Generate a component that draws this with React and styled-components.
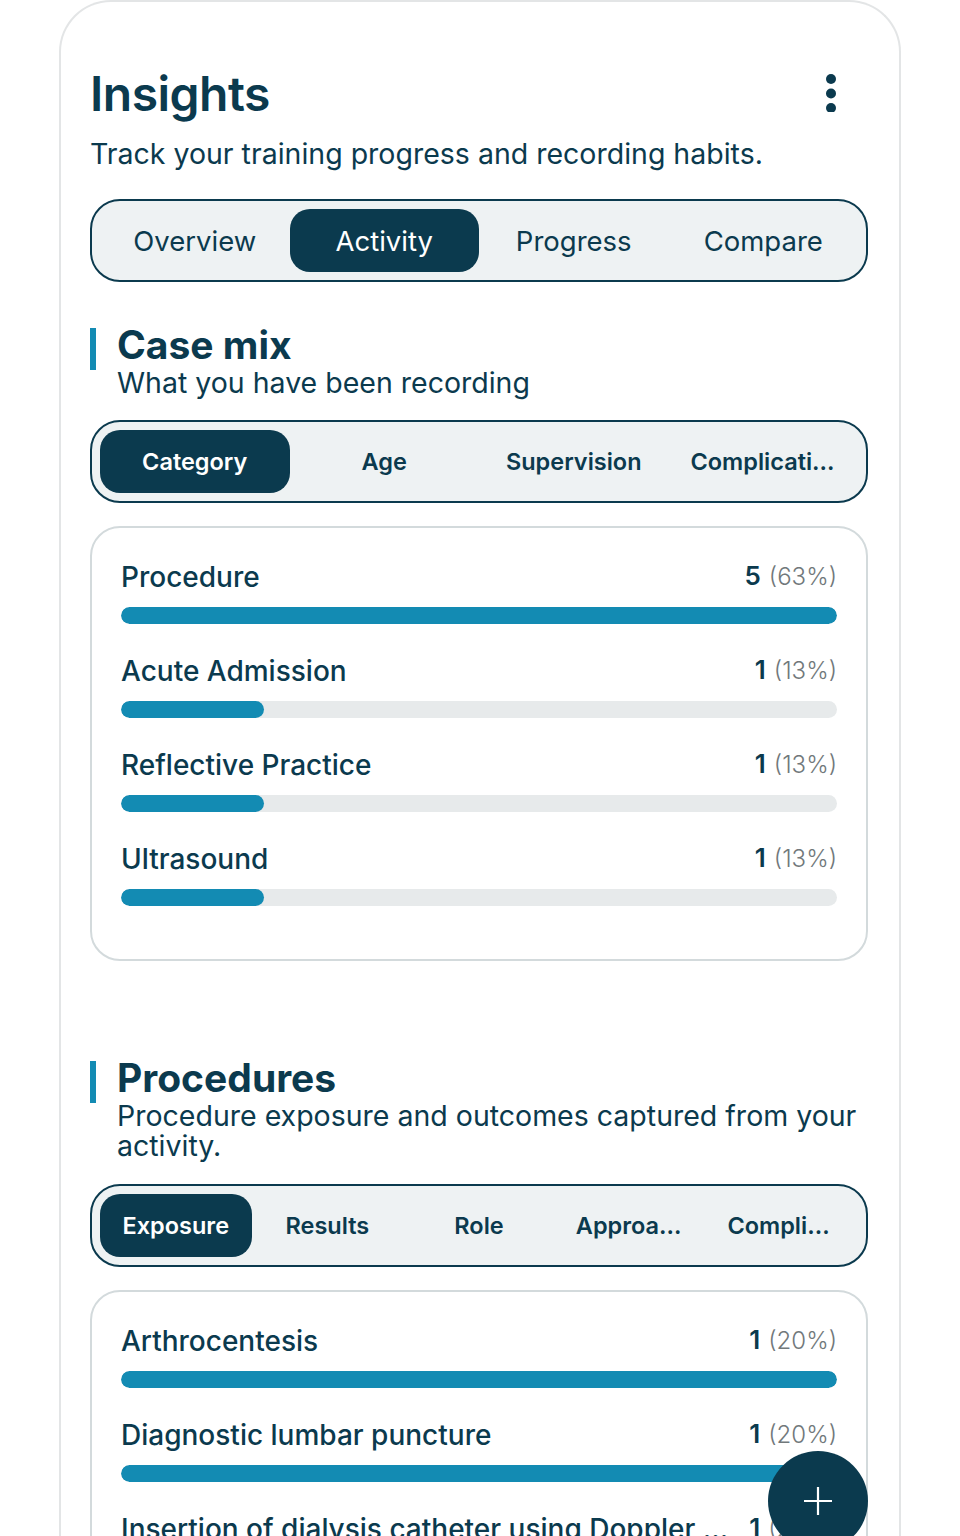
import React, { useState } from "react";
import styled, { createGlobalStyle } from "styled-components";

const ink = "#0b3a4e";
const teal = "#138bb3";

const GlobalStyle = createGlobalStyle`
  html, body {
    margin: 0;
    padding: 0;
    background: #ffffff;
    overflow: hidden;
  }
  * {
    box-sizing: border-box;
  }
`;

const Frame = styled.div`
  width: 842px;
  min-height: 1600px;
  margin: 0 auto;
  border: 2px solid #e3e5e6;
  border-bottom: none;
  border-radius: 52px 52px 0 0;
  padding: 62px 31px 0 29px;
  font-family: Inter, "Open Sans", sans-serif;
  color: ${ink};
`;

const Header = styled.div`
  display: flex;
  justify-content: space-between;
  align-items: flex-start;
`;

const Title = styled.h1`
  margin: 0;
  font-size: 48px;
  font-weight: 600;
  line-height: 60px;
  letter-spacing: -0.5px;
`;

const MoreButton = styled.button`
  border: none;
  background: none;
  padding: 10px 31px 0 0;
  cursor: pointer;
`;

const Subtitle = styled.p`
  margin: 10px 0 0;
  font-size: 28.5px;
  font-weight: 400;
  line-height: 40px;
`;

const Segmented = styled.div`
  display: grid;
  grid-template-columns: repeat(${(p) => p.$count}, 1fr);
  height: 83px;
  padding: 8px;
  margin-top: ${(p) => p.$top}px;
  border: 2px solid ${ink};
  border-radius: 30px;
  background: #eef2f3;
`;

const Segment = styled.button`
  border: none;
  border-radius: 20px;
  font-family: inherit;
  font-size: ${(p) => p.$size}px;
  font-weight: ${(p) => p.$weight};
  color: ${(p) => (p.$active ? "#ffffff" : ink)};
  background: ${(p) => (p.$active ? ink : "transparent")};
  white-space: nowrap;
  overflow: hidden;
  text-overflow: ellipsis;
  padding: 0 ${(p) => p.$pad}px;
  cursor: pointer;
`;

const Section = styled.section`
  display: flex;
  gap: 21px;
  margin-top: ${(p) => p.$top}px;
`;

const Accent = styled.div`
  flex: none;
  width: 6px;
  height: 42px;
  margin-top: 7px;
  background: ${teal};
`;

const SectionText = styled.div`
  display: flex;
  flex-direction: column;
`;

const SectionTitle = styled.h2`
  margin: 0;
  font-size: 39px;
  font-weight: 700;
  line-height: 47px;
`;

const SectionSub = styled.p`
  margin: 0;
  font-size: 28.5px;
  font-weight: 400;
  line-height: 30px;
`;

const Card = styled.div`
  display: flex;
  flex-direction: column;
  gap: 28px;
  margin-top: 23px;
  padding: 30px 29px 53px;
  border: 2px solid #d3dadc;
  border-radius: 30px;
  background: #ffffff;
`;

const Row = styled.div`
  display: flex;
  flex-direction: column;
  gap: 12px;
`;

const RowHead = styled.div`
  display: flex;
  justify-content: space-between;
  align-items: center;
  gap: 20px;
  line-height: 36px;
`;

const Label = styled.span`
  font-size: 28px;
  font-weight: 500;
  white-space: nowrap;
  overflow: hidden;
  text-overflow: ellipsis;
`;

const Count = styled.span`
  flex: none;
  font-size: 26px;
  font-weight: 600;
`;

const Share = styled.span`
  font-size: 24px;
  font-weight: 300;
  color: #71787b;
  margin-left: 8px;
`;

const Track = styled.div`
  height: 17px;
  border-radius: 9px;
  background: #e7eaeb;
  overflow: hidden;
`;

const Fill = styled.div`
  height: 100%;
  border-radius: 9px;
  background: ${teal};
`;

const Fab = styled.button`
  position: fixed;
  left: 768px;
  top: 1451px;
  width: 100px;
  height: 100px;
  border: none;
  border-radius: 50%;
  background: ${ink};
  display: flex;
  align-items: center;
  justify-content: center;
  cursor: pointer;
`;

const DotsIcon = () => (
  <svg width="12" height="38" viewBox="0 0 12 38">
    <circle cx="6" cy="5" r="5" fill={ink} />
    <circle cx="6" cy="19.5" r="5" fill={ink} />
    <circle cx="6" cy="34" r="5" fill={ink} />
  </svg>
);

const PlusIcon = () => (
  <svg width="30" height="30" viewBox="0 0 30 30">
    <path d="M15 1v28M1 15h28" stroke="#ffffff" strokeWidth="2.2" />
  </svg>
);

const Tabs = ({ items, active, onPick, size, weight, pad, top }) => (
  <Segmented $count={items.length} $top={top}>
    {items.map((item) => (
      <Segment
        key={item}
        $active={item === active}
        $size={size}
        $weight={weight}
        $pad={pad}
        onClick={() => onPick(item)}
      >
        {item}
      </Segment>
    ))}
  </Segmented>
);

const Breakdown = ({ rows }) => (
  <Card>
    {rows.map((r) => (
      <Row key={r.label}>
        <RowHead>
          <Label>{r.label}</Label>
          <Count>
            {r.count}
            <Share>({r.pct}%)</Share>
          </Count>
        </RowHead>
        <Track>
          <Fill style={{ width: `${r.width}%` }} />
        </Track>
      </Row>
    ))}
  </Card>
);

const caseMix = [
  { label: "Procedure", count: 5, pct: 63, width: 100 },
  { label: "Acute Admission", count: 1, pct: 13, width: 20 },
  { label: "Reflective Practice", count: 1, pct: 13, width: 20 },
  { label: "Ultrasound", count: 1, pct: 13, width: 20 },
];

const procedures = [
  { label: "Arthrocentesis", count: 1, pct: 20, width: 100 },
  { label: "Diagnostic lumbar puncture", count: 1, pct: 20, width: 100 },
  {
    label: "Insertion of dialysis catheter using Doppler ultrasound",
    count: 1,
    pct: 20,
    width: 100,
  },
];

export default function App() {
  const [view, setView] = useState("Activity");
  const [mix, setMix] = useState("Category");
  const [proc, setProc] = useState("Exposure");

  return (
    <>
      <GlobalStyle />
      <Frame>
        <Header>
          <Title>Insights</Title>
          <MoreButton aria-label="More">
            <DotsIcon />
          </MoreButton>
        </Header>
        <Subtitle>Track your training progress and recording habits.</Subtitle>

        <Tabs
          items={["Overview", "Activity", "Progress", "Compare"]}
          active={view}
          onPick={setView}
          size={27.5}
          weight={400}
          pad={10}
          top={25}
        />

        <Section $top={39}>
          <Accent />
          <SectionText>
            <SectionTitle>Case mix</SectionTitle>
            <SectionSub>What you have been recording</SectionSub>
          </SectionText>
        </Section>

        <Tabs
          items={["Category", "Age", "Supervision", "Complications"]}
          active={mix}
          onPick={setMix}
          size={23.5}
          weight={600}
          pad={22}
          top={22}
        />

        <Breakdown rows={caseMix} />

        <Section $top={93}>
          <Accent />
          <SectionText>
            <SectionTitle>Procedures</SectionTitle>
            <SectionSub>
              Procedure exposure and outcomes captured from your activity.
            </SectionSub>
          </SectionText>
        </Section>

        <Tabs
          items={["Exposure", "Results", "Role", "Approach", "Complications"]}
          active={proc}
          onPick={setProc}
          size={23.5}
          weight={600}
          pad={21}
          top={23}
        />

        <Breakdown rows={procedures} />
      </Frame>
      <Fab aria-label="Add">
        <PlusIcon />
      </Fab>
    </>
  );
}
